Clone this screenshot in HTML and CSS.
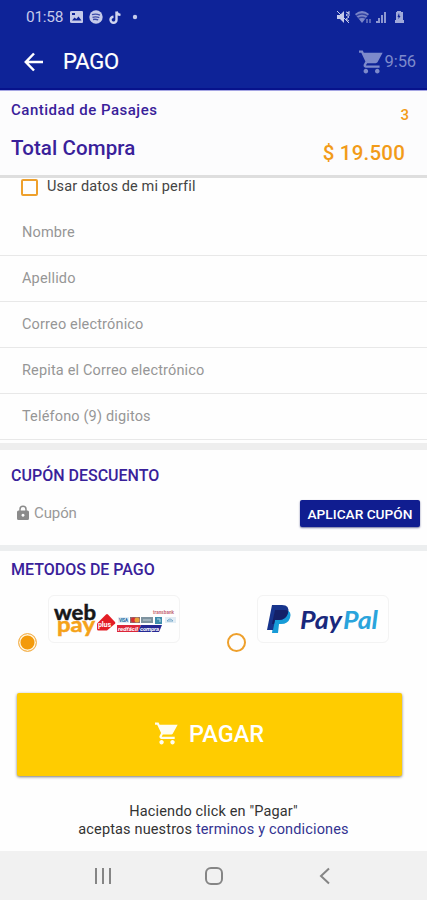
FILE: index.html
```html
<!DOCTYPE html>
<html lang="es">
<head>
<meta charset="utf-8">
<meta name="viewport" content="width=device-width">
<title>Pago</title>
<link rel="stylesheet" href="styles.css">
</head>
<body>
<svg class="defs" width="0" height="0">
  <symbol id="cart" viewBox="1 2 21 20"><path d="M7 18c-1.1 0-1.99.9-1.99 2S5.900 22 7 22s2-.9 2-2-.9-2-2-2zM1 2v2h2l3.600 7.590-1.350 2.450c-.16.28-.25.61-.25.96 0 1.100.9 2 2 2h12v-2H7.420c-.14 0-.25-.11-.25-.25l.03-.12.900-1.630h7.450c.75 0 1.410-.41 1.750-1.030L21.700 4H5.210l-.94-2H1zm16 16c-1.100 0-1.990.9-1.990 2s.89 2 1.990 2 2-.9 2-2-.9-2-2-2z"/></symbol>
</svg>
<header class="top">
  <div class="status">
    <span class="clock">01:58</span>
    <svg class="notifs" width="74" height="16" viewBox="0 0 74 16">
      <path fill-rule="evenodd" d="M3 2h10q1 0 1 1v10q0 1-1 1H3q-2 0-2-1V3q0-1 2-1zM3 11.500h9.500L9.500 7.500 7.300 10 5.500 8.500zM3 4v2h3V4z"/>
      <g transform="translate(6.500)"><circle cx="20.500" cy="8" r="6.700"/>
      <path class="waves" d="M16.500 5.700q4-1.400 8 .5M17 8.300q3.500-1.100 6.800.4M17.500 10.500q2.500-.7 5.200.4"/>
      <path class="note" d="M41 2.500v8.200a3 3 0 1 1-3-2.900M41 2.500q.5 3 4 3.400"/>
      <circle cx="59.500" cy="8" r="2.200"/></g>
    </svg>
    <svg class="signals" width="70" height="16" viewBox="0 0 70 16">
      <path d="M1 6h3l4-4v12l-4-4H1z"/>
      <path class="thin" d="M1 2l12 12M10 3l3 1-3 2 3 2-3 2 3 2M13 2v5"/>
      <g opacity=".8"><path d="M19 5q7-6 14 0l-7 9z" opacity=".75"/><path class="cut" d="M20 7q6-4 12 0M22 9.500q4-2.500 8 0"/><path class="thin" d="M31 14v-4m3 0v4"/></g>
      <path opacity=".7" d="M40 12h2v2h-2zM42 9h2v5h-2zM45 6h2v8h-2zM48 3h2v11h-2z"/>
      <path opacity=".8" fill-rule="evenodd" d="M61 2h4v1h2v8h1v3h-9v-3h1V3h1zM63 4l-1.500 4h1v2l2-3h-1z"/>
    </svg>
  </div>
  <div class="bar">
    <svg class="back" width="20" height="20" viewBox="0 0 20 20"><path d="M19 10H2M10 1.500L1.800 10l8.200 8.500"/></svg>
    <h1>PAGO</h1>
    <div class="timer"><svg width="24" height="24"><use href="#cart"/></svg><span>9:56</span></div>
  </div>
</header>
<section class="summary">
  <div class="line"><span class="count-label">Cantidad de Pasajes</span><span class="count">3</span></div>
  <div class="line total"><span class="total-label">Total Compra</span><span class="amount">$ 19.500</span></div>
</section>
<main>
  <div class="profile"><i class="check"></i><span>Usar datos de mi perfil</span></div>
  <div class="fields">
    <div class="field"><span>Nombre</span></div>
    <div class="field"><span>Apellido</span></div>
    <div class="field"><span>Correo electrónico</span></div>
    <div class="field"><span>Repita el Correo electrónico</span></div>
    <div class="field"><span>Teléfono (9) digitos</span></div>
  </div>
  <section class="coupon">
    <h2>CUPÓN DESCUENTO</h2>
    <div class="coupon-row">
      <svg width="12" height="16" viewBox="0 0 12 16"><path class="shackle" d="M3 6V4.200a3 3 0 0 1 6 0V6"/><path fill-rule="evenodd" d="M1.500 5.500h9q1.500 0 1.500 1.500v6.500q0 1.500-1.500 1.500h-9Q0 15 0 13.500V7q0-1.500 1.500-1.500zM6 8.700a1.500 1.500 0 1 0 .01 0z"/></svg>
      <span class="coupon-input">Cupón</span>
      <button class="apply">APLICAR CUPÓN</button>
    </div>
  </section>
  <section class="methods">
    <h2 class="methods-title">METODOS DE PAGO</h2>
    <div class="options">
      <div class="option">
        <i class="radio on"></i>
        <div class="brand">
          <svg width="130" height="46" viewBox="0 0 130 46">
            <g class="webpay">
              <text x="5" y="24" textLength="42" lengthAdjust="spacingAndGlyphs">web</text>
              <text class="pay" x="8" y="35.500" textLength="38" lengthAdjust="spacingAndGlyphs">pay</text>
            </g>
            <path fill="#e31d25" d="M57 18.500q1-.8 2 0L66 26q.7 1 0 1.700L58 34.500H49.500q-1.500 0-1.500-1.500v-5.500z"/>
            <text class="plus" x="49" y="30.500" textLength="13">plus</text>
            <text class="trans" x="104" y="18" textLength="21" lengthAdjust="spacingAndGlyphs">transbank</text>
            <path fill="#e2edf5" d="M69 21h11v6H69zM116 21h11v6h-11z"/>
            <text class="visa" x="70" y="26" textLength="9">VISA</text>
            <path fill="#8d6e72" d="M81 21h10v6H81z"/><circle cx="84.500" cy="24" r="2.500" fill="#d72e31"/><circle cx="88" cy="24" r="2.500" fill="#e9a23a"/>
            <path fill="#7e939f" d="M92 21h12v6H92z"/><path stroke="#c3d0d7" d="M94 24h8"/>
            <path fill="#3f8dac" d="M106 21h7v7h-7z"/><path stroke="#b9dce8" fill="none" d="M108 23h3v3"/>
            <path stroke="#78a9ca" fill="none" d="M118 25q3-4 6 0z"/>
            <path fill="#dc2639" d="M68 29h24l-3 7H68z"/><path fill="#252894" d="M92 29h21l-3 7H89z"/>
            <text class="red" x="69" y="34.500" textLength="20">redfácil</text><text class="red" x="91" y="34.500" textLength="19">compra</text>
          </svg>
        </div>
      </div>
      <div class="option">
        <i class="radio"></i>
        <div class="brand">
          <svg width="130" height="46" viewBox="0 0 130 46">
            <path fill="#179bd7" d="M18 14h10q6 1 4 8-2 6-9 6h-2l-1 9h-6l2-15z"/>
            <path fill="#17348c" d="M14 9h10q8 0 6 8-2 7-9 7h-4l-2 10H9z"/>
            <path fill="#142067" d="M17 14h11q2.500.6 2 3-2 7-9 7h-4l-1 4h-2z"/>
            <text class="pp" x="42" y="33" textLength="42" lengthAdjust="spacingAndGlyphs">Pay</text><text class="pp pal" x="85" y="33" textLength="35" lengthAdjust="spacingAndGlyphs">Pal</text>
          </svg>
        </div>
      </div>
    </div>
  </section>
  <button class="pay-button"><svg width="23" height="23"><use href="#cart"/></svg><span>PAGAR</span></button>
  <p class="legal"><span class="legal-a">Haciendo click en "Pagar"</span><br><span class="legal-b">aceptas nuestros <a>terminos y condiciones</a></span></p>
</main>
<nav class="navbar">
  <svg width="18" height="18" viewBox="0 0 18 18"><path d="M2 1v16M9 1v16M16 1v16"/></svg>
  <svg width="18" height="18" viewBox="0 0 18 18"><rect x="1" y="1" width="16" height="16" rx="5"/></svg>
  <svg width="18" height="18" viewBox="0 0 18 18"><path d="M13 1.500L5 9l8 7.500"/></svg>
</nav>
</body>
</html>
```
FILE: styles.css
```css
* { box-sizing: border-box; }
body { margin: 0; width: 427px; height: 900px; overflow: hidden; display: flex; flex-direction: column; background: #fefefe; font-family: Roboto, sans-serif; color: #333; }
h1, h2, p { margin: 0; font-weight: 500; }
button { border: 0; padding: 0; font-family: inherit; color: #fff; }
svg { flex: none; }
.defs { position: absolute; }
.top { height: 91px; flex: none; background: #0e2398; border-bottom: 1px solid #a5a5e3; box-shadow: inset 0 -2px #07128c; }
.status { height: 34px; display: flex; align-items: center; padding: 0 21px 0 26px; color: #c5caea; fill: #c5caea; }
.clock { font-size: 15.500px; width: 43px; letter-spacing: -.3px; }
.signals { margin-left: auto; }
.waves, .cut { fill: none; stroke: #3c4ba6; stroke-width: 1.300; }
.note { fill: none; stroke: #d1d5f0; stroke-width: 2.400; }
.thin { fill: none; stroke: #c5caea; }
.bar { height: 55px; display: flex; align-items: center; padding: 0 11px 0 24px; color: #fff; }
.back { fill: none; stroke: #fff; stroke-width: 2.500; }
h1 { font-size: 22px; margin-left: 19px; font-weight: 400; -webkit-text-stroke: .2px; letter-spacing: -.2px; }
.timer { margin-left: auto; display: flex; align-items: center; gap: 2px; color: #7d8acb; fill: #7d8acb; font-size: 16.500px; letter-spacing: -.1px; }
.summary { height: 87px; flex: none; padding: 9px 22px 0 11px; background: #fcfcfd; border-bottom: 3px solid #dedede; color: #39219a; font-weight: 500; }
.line { display: flex; justify-content: space-between; height: 36px; }
.count-label { font-size: 15px; line-height: 21px; letter-spacing: .5px; }
.count { color: #f29b18; font-size: 15px; line-height: 30px; margin-right: -4px; }
.total-label { font-size: 20.500px; line-height: 24px; letter-spacing: .1px; }
.amount { color: #f29b18; font-size: 20.500px; line-height: 34px; letter-spacing: .2px; }
main { flex: 1; display: flex; flex-direction: column; }
.profile { height: 32px; display: flex; align-items: flex-start; padding-left: 21px; font-size: 14.500px; line-height: 18px; letter-spacing: .13px; color: #444; }
.check { width: 17px; height: 17px; border: 2.500px solid #eea02c; border-radius: 2px; margin: 1px 9px 0 0; }
.field { height: 46px; padding-left: 22px; border-bottom: 1px solid #e8e8e8; font-size: 14.500px; line-height: 45px; letter-spacing: .16px; color: #969696; }
.fields { border-bottom: 7px solid #eee; padding-bottom: 3px; }
.coupon { height: 101px; border-bottom: 6px solid #eceeef; padding: 16px 7px 0 11px; }
h2 { color: #39219a; font-size: 16px; line-height: 20px; }
.coupon-row { display: flex; align-items: center; margin-top: 14px; padding-left: 6px; color: #999; fill: #8b8b8b; }
.coupon-row > svg { margin-bottom: 2px; }
.shackle { fill: none; stroke: #8b8b8b; stroke-width: 1.500; }
.coupon-input { font-size: 15px; margin: 0 0 2px 5px; letter-spacing: -.1px; }
.apply { margin-left: auto; width: 120px; height: 27px; background: #101d90; border-radius: 2px; box-shadow: 0 1px 2px #6e729f; font-size: 13.700px; font-weight: 500; }
.methods { height: 142px; padding: 9px 0 0 11px; }
.options { display: flex; padding: 15px 0 0 7px; gap: 47px; }
.option { display: flex; gap: 11px; }
.radio { width: 19px; height: 19px; border: 2px solid #eea02c; border-radius: 50%; margin-top: 38px; }
.radio.on { border: 1px solid #f5b85e; background: #f39a0b; box-shadow: inset 0 0 0 1.500px #fff5df; }
.brand { width: 132px; height: 48px; border: 1px solid #f3f3f3; border-radius: 6px; }
.webpay { font: bold 21px Lato, sans-serif; fill: #171717; stroke: #171717; stroke-width: .5; }
.webpay .pay { fill: #f5a219; stroke: #f5a219; }
.plus, .visa, .red, .trans { font: bold 7px Roboto, sans-serif; fill: #fff; }
.trans { font-size: 5px; fill: #c66b79; }
.visa { font-size: 4.500px; fill: #286ba2; }
.red { font-size: 6px; font-style: italic; }
.pp { font: italic bold 24px Lato, sans-serif; fill: #19287c; }
.pp.pal { fill: #2aa4dc; }
.pay-button { margin: 0 25px 0 17px; height: 83px; padding-bottom: 2px; display: flex; align-items: center; justify-content: center; gap: 11px; background: #fc0; border-radius: 2px; box-shadow: 0 1px 3px #777; fill: #fffdf0; font-size: 23.500px; font-weight: 500; }
.legal { text-align: center; font-size: 14.500px; line-height: 17.500px; font-weight: 400; margin-top: 27px; color: #333; letter-spacing: .15px; }
.legal a { color: #333391; }
.navbar { height: 49px; flex: none; background: #f1f1f1; display: flex; align-items: center; padding-left: 94px; gap: 93px; fill: none; stroke: #858585; stroke-width: 2; }
```
